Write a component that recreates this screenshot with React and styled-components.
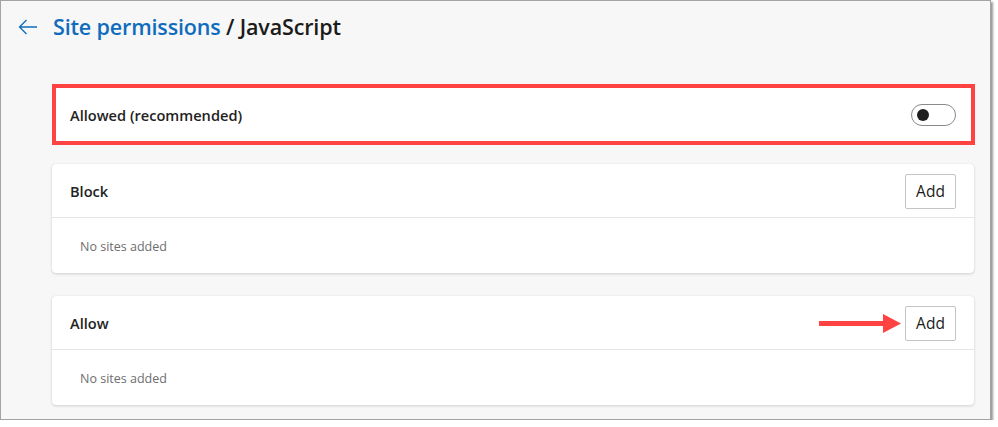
import React from "react";
import styled, { createGlobalStyle } from "styled-components";

const Global = createGlobalStyle`
  html, body { margin: 0; padding: 0; background: #ffffff; }
  body { font-family: "Open Sans", "Noto Sans", "Liberation Sans", sans-serif; color: #1b1b1b; }
`;

const Frame = styled.div`
  box-sizing: border-box;
  width: 991px;
  height: 420px;
  background: #f7f7f7;
  border: 1px solid #a3a3a3;
  box-shadow: 2px 2px 2px rgba(0, 0, 0, 0.4);
  overflow: hidden;
`;

const Header = styled.div`
  box-sizing: border-box;
  display: flex;
  align-items: center;
  height: 54px;
  padding: 0 0 3px 17px;
  gap: 15px;
`;

const BackButton = styled.button`
  display: flex;
  align-items: center;
  justify-content: center;
  width: 20px;
  height: 20px;
  padding: 0;
  border: none;
  background: none;
  color: #0f6cbd;
`;

const Title = styled.h1`
  margin: 0;
  font-size: 21.5px;
  font-weight: 600;
  letter-spacing: -0.15px;
  color: #1b1b1b;
`;

const Crumb = styled.span`
  color: #0f6cbd;
`;

const Content = styled.div`
  display: flex;
  flex-direction: column;
  margin-left: 51px;
  width: 923px;
  padding-top: 29px;
`;

const HighlightCard = styled.div`
  box-sizing: border-box;
  display: flex;
  align-items: center;
  justify-content: space-between;
  height: 61px;
  padding: 1px 15px 0 14px;
  background: #fff;
  border: 4px solid #ff4343;
`;

const Card = styled.div`
  margin-top: ${(p) => p.$gap}px;
  width: 922px;
  background: #fff;
  border-radius: 4px;
  box-shadow: 0 1px 3px rgba(0, 0, 0, 0.16), 0 0 1px rgba(0, 0, 0, 0.1);
`;

const CardHeader = styled.div`
  box-sizing: border-box;
  display: flex;
  align-items: center;
  justify-content: space-between;
  height: 54px;
  padding: 1px 18px 0;
  border-bottom: 1px solid #e6e6e6;
`;

const Label = styled.span`
  font-size: 14.6px;
  font-weight: 600;
  color: #222;
`;

const Empty = styled.div`
  display: flex;
  align-items: center;
  height: 54px;
  padding: 1px 0 0 28px;
  font-size: 12.5px;
  color: #6e6e6e;
`;

const Actions = styled.div`
  position: relative;
  display: flex;
  align-items: center;
`;

const AddButton = styled.button`
  box-sizing: border-box;
  width: 51px;
  height: 35px;
  padding: 0;
  background: #fff;
  border: 1px solid #c4c4c4;
  border-radius: 2px;
  font-family: inherit;
  font-size: 15.5px;
  color: #1b1b1b;
`;

const Toggle = styled.div`
  box-sizing: border-box;
  display: flex;
  align-items: center;
  width: 45px;
  height: 22px;
  padding-left: 5px;
  border: 1px solid #8a8a8a;
  border-radius: 11px;
`;

const Knob = styled.span`
  width: 12px;
  height: 12px;
  border-radius: 50%;
  background: #1f1f1f;
`;

const Pointer = styled.svg`
  position: absolute;
  right: 55px;
  top: 8px;
`;

export default function App() {
  return (
    <>
      <Global />
      <Frame>
        <Header>
          <BackButton aria-label="Back">
            <svg width="20" height="16" viewBox="0 0 20 16" fill="none" stroke="currentColor" strokeWidth="1.3">
              <path d="M19 8H1.5M8.5 1L1.5 8l7 7" />
            </svg>
          </BackButton>
          <Title>
            <Crumb>Site permissions</Crumb> / JavaScript
          </Title>
        </Header>
        <Content>
          <HighlightCard>
            <Label>Allowed (recommended)</Label>
            <Toggle>
              <Knob />
            </Toggle>
          </HighlightCard>
          <Card $gap={19}>
            <CardHeader>
              <Label>Block</Label>
              <AddButton>Add</AddButton>
            </CardHeader>
            <Empty>No sites added</Empty>
          </Card>
          <Card $gap={23}>
            <CardHeader>
              <Label>Allow</Label>
              <Actions>
                <Pointer width="82" height="19" viewBox="0 0 82 19">
                  <rect x="0" y="7" width="66" height="5" fill="#ff4343" />
                  <polygon points="64,0 82,9.5 64,19" fill="#ff4343" />
                </Pointer>
                <AddButton>Add</AddButton>
              </Actions>
            </CardHeader>
            <Empty>No sites added</Empty>
          </Card>
        </Content>
      </Frame>
    </>
  );
}
